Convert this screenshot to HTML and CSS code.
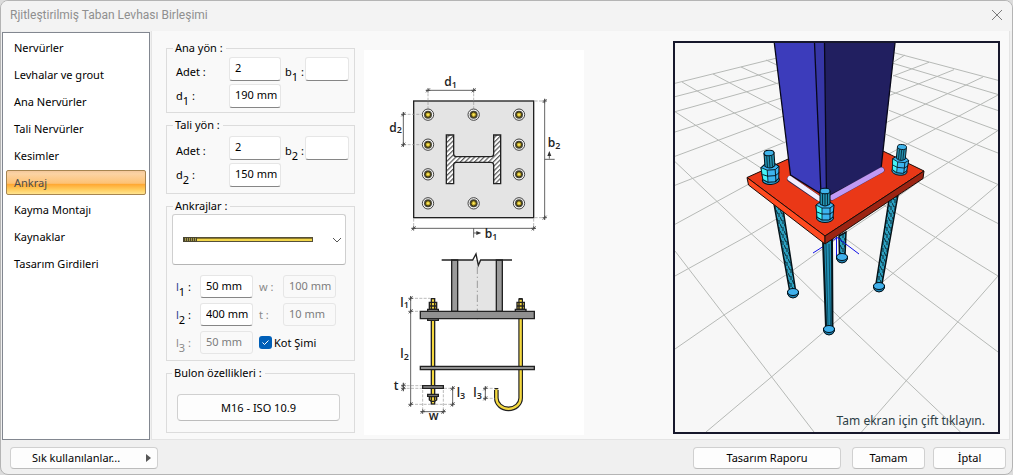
FILE: index.html
```
<!DOCTYPE html>
<html lang="tr">
<head>
<meta charset="utf-8">
<title>Rjitleştirilmiş Taban Levhası Birleşimi</title>
<link rel="stylesheet" href="styles.css">
</head>
<body>
<div class="window">
  <header class="titlebar">
    <h1 class="title">Rjitleştirilmiş Taban Levhası Birleşimi</h1>
    <button class="close" type="button" aria-label="Kapat">
      <svg width="12" height="12" viewBox="0 0 12 12"><path d="M1 1L11 11M11 1L1 11" fill="none" stroke="#7b7b7b" stroke-width="1"/></svg>
    </button>
  </header>

  <main class="content">
    <nav class="sections">
      <button class="section" type="button">Nervürler</button>
      <button class="section" type="button">Levhalar ve grout</button>
      <button class="section" type="button">Ana Nervürler</button>
      <button class="section" type="button">Tali Nervürler</button>
      <button class="section" type="button">Kesimler</button>
      <button class="section selected" type="button" aria-current="page">Ankraj</button>
      <button class="section" type="button">Kayma Montajı</button>
      <button class="section" type="button">Kaynaklar</button>
      <button class="section" type="button">Tasarım Girdileri</button>
    </nav>

    <div class="panel">
      <form class="form">
        <fieldset class="group">
          <legend>Ana yön :</legend>
          <div class="grid main-grid">
            <label class="upper" for="n1">Adet :</label><input id="n1" type="text" value="2">
            <label class="upper side" for="b1">b<sub>1</sub> :</label><input id="b1" type="text">
            <label for="d1">d<sub>1</sub> :</label><input id="d1" type="text" value="190 mm">
          </div>
        </fieldset>
        <fieldset class="group secondary">
          <legend>Tali yön :</legend>
          <div class="grid main-grid">
            <label class="upper" for="n2">Adet :</label><input id="n2" type="text" value="2">
            <label class="upper side" for="b2">b<sub>2</sub> :</label><input id="b2" type="text">
            <label for="d2">d<sub>2</sub> :</label><input id="d2" type="text" value="150 mm">
          </div>
        </fieldset>
        <fieldset class="group anchors">
          <legend>Ankrajlar :</legend>
          <div class="picker">
            <select class="picker-select" aria-label="Ankraj tipi"><option></option></select>
            <svg class="picker-bolt" width="130" height="6" viewBox="0 0 130 6">
              <rect x="0.5" y="0.5" width="129" height="4" fill="#f2d64a" stroke="#55503a"/>
              <rect x="0" y="0" width="14" height="5" fill="#4a4630"/>
              <path d="M2.500 1V4M4.500 1V4M6.500 1V4M8.500 1V4M10.500 1V4M12.500 1V4" stroke="#a59845"/>
              <path d="M14 1.500H129" stroke="#8d7a2a"/>
            </svg>
            <svg class="picker-arrow" width="10" height="6" viewBox="0 0 10 6"><path d="M1 1L5 5L9 1" fill="none" stroke="#555"/></svg>
          </div>
          <div class="grid size-grid">
            <label for="l1"><i class="ell">l</i><sub>1</sub> :</label><input id="l1" type="text" value="50 mm">
            <label class="off side" for="w">w :</label><input id="w" type="text" value="100 mm" disabled>
            <label for="l2"><i class="ell">l</i><sub>2</sub> :</label><input id="l2" type="text" value="400 mm">
            <label class="off side" for="t">t :</label><input id="t" type="text" value="10 mm" disabled>
            <label class="off" for="l3"><i class="ell">l</i><sub>3</sub> :</label><input id="l3" type="text" value="50 mm" disabled>
            <label class="check"><input class="tick" type="checkbox" checked>Kot Şimi</label>
          </div>
        </fieldset>
        <fieldset class="group bolt">
          <legend>Bulon özellikleri :</legend>
          <button class="button" type="button">M16 - ISO 10.9</button>
        </fieldset>
      </form>

      <svg class="diagram" viewBox="0 0 660 1155" role="img" aria-label="Ankraj yerleşimi">
        <defs>
          <pattern id="hatch" width="10" height="10" patternUnits="userSpaceOnUse" patternTransform="rotate(45)">
            <rect width="10" height="10" fill="#fff"/><path d="M2 0V10" stroke="#333" stroke-width="3"/>
          </pattern>
          <g id="hole">
            <circle r="17" fill="#f4f4f4" stroke="#444" stroke-width="3"/>
            <circle r="12" fill="#4a4a42"/>
            <circle r="8" fill="#c9b02c" stroke="#3a3412" stroke-width="3"/>
            <circle r="3" fill="#ffee66"/>
          </g>
          <path id="tick" d="M-6 6L6 -6M-7 0H7M0 -7V7" stroke="#444" stroke-width="2.500"/>
        </defs>
        <rect x="149" y="153" width="360" height="350" fill="#e4e4e4" stroke="#222" stroke-width="4"/>
        <path d="M247 255H269V312Q269 320 277 320H381Q389 320 389 312V255H410V401H389V345Q389 337 381 337H277Q269 337 269 345V401H247Z" fill="url(#hatch)" stroke="#222" stroke-width="4"/>
        <g class="thin dash">
          <path d="M192 130V176M329 130V176M118 193H172M118 284H172M512 153H545M512 503H545M149 506V535M509 506V535"/>
        </g>
        <g class="thin">
          <path d="M186 121H336M118 186V290M542 147V509M143 535H515M542 328H572M556 326V308M329 535V563M329 549H346"/>
        </g>
        <path d="M556 303L562 318H550ZM352 549L337 543V555Z" fill="#333"/>
        <use href="#tick" x="192" y="121"/><use href="#tick" x="329" y="121"/>
        <use href="#tick" x="118" y="193"/><use href="#tick" x="118" y="284"/>
        <use href="#tick" x="542" y="153"/><use href="#tick" x="542" y="503"/>
        <use href="#tick" x="149" y="535"/><use href="#tick" x="509" y="535"/>
        <use href="#hole" x="192" y="194"/><use href="#hole" x="329" y="194"/><use href="#hole" x="465" y="194"/>
        <use href="#hole" x="192" y="284"/><use href="#hole" x="465" y="284"/>
        <use href="#hole" x="192" y="373"/><use href="#hole" x="465" y="373"/>
        <use href="#hole" x="192" y="460"/><use href="#hole" x="329" y="460"/><use href="#hole" x="465" y="460"/>
        <g class="dim">
          <text x="241" y="109">d<tspan class="idx" dy="5">1</tspan></text>
          <text x="76" y="245">d<tspan class="idx" dy="5">2</tspan></text>
          <text x="551" y="290">b<tspan class="idx" dy="6">2</tspan></text>
          <text x="362" y="563">b<tspan class="idx" dy="6">1</tspan></text>
        </g>

        <g transform="translate(0 570)">
          <rect x="282" y="60" width="115" height="154" fill="#e4e4e4"/>
          <path d="M263 60H281V214H263ZM397 60H415V214H397Z" fill="#9a9a9a" stroke="#222" stroke-width="4"/>
          <path d="M233 60H326L336 42L343 76L350 60H444" fill="none" stroke="#222" stroke-width="4"/>
          <path d="M340 80V238" stroke="#777" stroke-width="2" stroke-dasharray="22 8 4 8"/>
          <path d="M397 450V474A36 32 0 0 0 470 474V176" fill="none" stroke="#222" stroke-width="14"/>
          <path d="M397 447V474A36 32 0 0 0 470 474V179" fill="none" stroke="#f5d93f" stroke-width="7"/>
          <path d="M391 446H403M464 176H476" stroke="#222" stroke-width="4"/>
          <rect x="202" y="176" width="10" height="316" fill="#f5d93f" stroke="#222" stroke-width="4"/>
          <g fill="#f0d23c" stroke="#222" stroke-width="4">
            <path d="M196 187H218V208H196ZM459 187H481V208H459ZM196 470H218V480L212 484H202L196 480Z"/>
            <path d="M202 187V208M212 187V208M465 187V208M475 187V208M196 198H218M459 198H481M202 470V482M212 470V482"/>
          </g>
          <g fill="#909090" stroke="#222" stroke-width="4">
            <path d="M169 214H511V236H169ZM169 379H511V389H169Z"/>
            <path d="M191 208H223V214H191ZM454 208H486V214H454ZM191 236H223V241H191ZM176 437H238V445H176ZM191 463H223V469H191Z"/>
          </g>
          <g class="thin dash"><path d="M140 175H198M140 214H168M115 437H174M115 445H174M140 493H200M176 450V515M238 450V515M240 445H266M214 493H266M364 445H392M364 475H392"/></g>
          <g class="thin"><path d="M140 168V499M170 515H244M266 440V498M364 440V480M118 428V454"/></g>
          <use href="#tick" x="140" y="175"/><use href="#tick" x="140" y="214"/><use href="#tick" x="140" y="493"/>
          <use href="#tick" x="118" y="436"/><use href="#tick" x="118" y="446"/>
          <use href="#tick" x="176" y="515"/><use href="#tick" x="238" y="515"/>
          <use href="#tick" x="266" y="445"/><use href="#tick" x="266" y="493"/>
          <use href="#tick" x="364" y="445"/><use href="#tick" x="364" y="475"/>
          <g class="dim strong">
            <text x="109" y="200">l<tspan class="idx" dy="5">1</tspan></text>
            <text x="109" y="355">l<tspan class="idx" dy="5">2</tspan></text>
            <text x="89" y="449">t</text>
            <text x="194" y="540">w</text>
            <text x="278" y="472">l<tspan class="idx" dy="6">3</tspan></text>
            <text x="328" y="472">l<tspan class="idx" dy="6">3</tspan></text>
          </g>
        </g>
      </svg>

      <div class="viewport">
        <svg class="scene" viewBox="675 43 323 389" role="img" aria-label="Birleşimin üç boyutlu görünümü">
          <defs>
            <pattern id="thread" width="4" height="7" patternUnits="userSpaceOnUse">
              <rect width="4" height="7" fill="#2ba0c0"/><path d="M0 0L2 4M3 3V7" stroke="#0a2733" stroke-width="1"/>
            </pattern>
            <g id="nut">
              <ellipse cx="0" cy="27" rx="8.500" ry="4.500" fill="#2f9fd0" stroke="#021018" stroke-width="1"/>
              <path d="M-9 14L-8 26L-3 29H4L8 26L9 14L5 11H-5Z" fill="#3cb4f0" stroke="#021018"/>
              <path d="M-9 14L-8 26L-3 29V17Z" fill="#45f4f8" stroke="#021018" stroke-width="0.800"/>
              <path d="M-3 17H5L9 14M5 17V29M-8 21L-3 23H5L9 20" fill="none" stroke="#021018" stroke-width="0.900"/>
              <path d="M-5 0V13Q0 17 5 13V0Z" fill="#2593b2" stroke="#021018"/>
              <path d="M-2.500 3V14M0 3V15M2.500 3V14" stroke="#073040"/>
              <ellipse rx="5" ry="2.800" fill="#40b4ea" stroke="#021018"/>
            </g>
            <g id="foot">
              <path d="M-5.500 -1V2Q-4 6 0 6T5.500 2V-1Z" fill="#1d7fae" stroke="#021018"/>
              <ellipse rx="5.500" ry="3.500" fill="#3fb0ec" stroke="#021018"/>
            </g>
          </defs>
          <rect x="675" y="43" width="323" height="389" fill="#f7f7f7"/>
          <g fill="none" stroke="#b6b9b6" stroke-width="1">
            <path d="M675 83.300L777 58M675 96.700L778 70M675 111.700L780 82.500M675 132L783 97.500M675 156.300L785 115.500M675 185.300L788 141M675 224.300L760 178"/>
            <path d="M766 60L777 65M741 67L778 84M713 74L781 110M682 82L785 143M675 111.700L770 174M675 161.700L719 203.300L751 233.500L792 271L840 318L960.500 432M675 251L814 432"/>
            <path d="M894 52.700L998 80.300M893 63.300L998 94.500M893 75.300L998 110.500M890 91L998 130.500M889 110.300L998 153M886 134.300L998 184.500M910 178L998 223.500M880 203L998 276M820 220L893 273.300L998 352"/>
            <path d="M894 61.700L905 55M893 76L929 62.300M890 95.300L954 69.700M886 122.700L983 77M885 156L908 143.700L998 95M675 349L724 315L792 271L842 235L885 206L921 180L998 130.500M706 432L772 376.500L840 318L893 273.300L936 237L998 184.500M861.500 432L906 381L958 321.700L998 276M675 276L751 234L790 211"/>
          </g>
          <g stroke="#06141a" fill="url(#thread)" stroke-width="1.500">
            <path d="M774 204L783 209L795.500 290H789.500Z"/>
            <path d="M889 200L898 195L882 284H876Z"/>
            <path d="M839 236L846 232L845 256H839.500Z"/>
          </g>
          <path d="M836.500 237V257M836.500 237L859 254M836.500 238L813 253" stroke="#1010e8" fill="none"/>
          <use href="#foot" x="793" y="292"/><use href="#foot" x="879" y="286"/><use href="#foot" x="842" y="257"/>
          <path d="M823 240H832L832.500 327H826Z" fill="#2290b4" stroke="#06141a" stroke-width="2"/>
          <path d="M826 244L828 326M829 244L830.500 326" stroke="#0b5068"/>
          <use href="#foot" x="829" y="329"/>

          <g stroke="#1a0c08" stroke-width="1" stroke-linejoin="round">
            <path d="M747 177.500L846 133L924 171L825 236Z" fill="#ea3817"/>
            <path d="M747 177.500L825 236V244L748.500 185Z" fill="#ff4a20"/>
            <path d="M825 236L924 171L923 178.500L825 244Z" fill="#9c2413"/>
          </g>
          <path d="M774.300 43H815L821 194L790.500 175Z" fill="#3c3cbb"/>
          <path d="M814.500 43H825L827 197L820.500 194Z" fill="#3636a6"/>
          <path d="M824.500 43H895L881 169L826.500 197Z" fill="#211f60"/>
          <path d="M774.300 43L790.500 175L821 194M814.500 43L821 194M824.500 43L826.500 197L881 169L895 43" fill="none" stroke="#07071a" stroke-width="1.300"/>
          <path d="M790 179L818 198" stroke="#33254a" stroke-width="6" stroke-linecap="round"/>
          <path d="M790 178.500L819 198.500" stroke="#f3efff" stroke-width="5" stroke-linecap="round"/>
          <path d="M881.500 170L832 197.500" stroke="#4a3766" stroke-width="6" stroke-linecap="round"/>
          <path d="M881.500 170L832 197.500" stroke="#c09af5" stroke-width="5" stroke-linecap="round"/>
          <use href="#nut" transform="translate(825 191)"/>
          <use href="#nut" transform="translate(769 153) rotate(-4)"/>
          <use href="#nut" transform="translate(902 147) rotate(6) scale(.9)"/>
        </svg>
        <p class="hint">Tam ekran için çift tıklayın.</p>
      </div>
    </div>
  </main>

  <footer class="footer">
    <button class="button favorites" type="button">Sık kullanılanlar...
      <svg width="5" height="8" viewBox="0 0 5 8"><path d="M0 0L5 4L0 8Z" fill="#555"/></svg>
    </button>
    <button class="button report" type="button">Tasarım Raporu</button>
    <button class="button small" type="button">Tamam</button>
    <button class="button small" type="button">İptal</button>
  </footer>
</div>
</body>
</html>
```
FILE: styles.css
```
* { box-sizing: border-box; }

body {
  margin: 0;
  background: #dcdcdc;
  color: #000;
  font: 11px/14px "Noto Sans", "Open Sans", sans-serif;
}

button, input, select { font: inherit; color: inherit; margin: 0; }

.window {
  display: flex;
  flex-direction: column;
  min-height: 100vh;
  background: #f0f0f0;
  border: 1px solid #b4b4b4;
  border-radius: 8px;
  overflow: hidden;
}

.titlebar {
  display: flex;
  align-items: center;
  justify-content: space-between;
  height: 30px;
  padding: 0 9px 2px 9px;
  background: #f3f3f3;
}
.title { margin: 0; color: #8f8f8f; font: 12px/16px Roboto, "Noto Sans", sans-serif; }
.close { display: flex; padding: 0; border: 0; background: none; }

.content { display: flex; flex: 1; }

.sections {
  display: flex;
  flex-direction: column;
  gap: 2px;
  width: 148px;
  margin: 1px 1px 0 1px;
  padding: 2px 3px;
  background: #fff;
  border: 1px solid #828790;
}
.section {
  height: 25px;
  padding: 0 7px;
  text-align: left;
  background: none;
  border: 1px solid transparent;
  border-radius: 2px;
}
.selected {
  color: #4c4c4c;
  border-color: #a78550;
  background: linear-gradient(#f3c79b, #fbd3a4 12%, #fdc274 54%, #ffa52f 56%, #ffcb5c 80%, #ffe48f);
}

.panel {
  display: flex;
  flex: 1;
  align-items: flex-start;
  margin-right: 2px;
  padding: 10px 9px 4px 14px;
  background: #f9f9f9;
  border: 1px solid #e4e4e4;
  border-top: 0;
}

.form { display: flex; flex-direction: column; gap: 5px; width: 189px; }
.group {
  min-width: 0;
  margin: 0;
  padding: 2px 5px 4px 9px;
  border: 1px solid #dcdcdc;
}
.group legend { margin-left: -3px; padding: 0 3px 0 2px; }
.secondary { padding-top: 4px; padding-bottom: 6px; }
.anchors { padding: 1px 8px 6px 5px; }
.anchors legend { margin-left: 1px; }
.bolt { padding: 14px 14px 11px 10px; }
.bolt legend { margin-left: -5px; }

.grid { display: grid; align-items: center; }
.main-grid { grid-template-columns: 53px 52px 24px 1fr; gap: 3px 0; }
.main-grid .side { padding-left: 4px; }
.upper { padding-top: 6px; }
.size-grid { grid-template-columns: 24px 53px 30px 53px; gap: 5px 0; padding: 10px 0 0 4px; }
.size-grid .side { padding-left: 6px; }
sub { font-size: 11px; line-height: 0; vertical-align: -5px; }
.ell { font-style: normal; color: #2c3c90; }
.off, .off .ell { color: #8a8a8a; }

input[type="text"] {
  width: 100%;
  min-width: 0;
  height: 24px;
  padding: 0 1px 3px 5px;
  background: #fff;
  border: 1px solid #e6e6e6;
  border-bottom-color: #868686;
  border-radius: 3px;
}
.size-grid input[type="text"] { height: 23px; }
input[type="text"]:disabled { background: #f9f9f9; color: #7c7c7c; border-color: #e6e6e6; }

.check { grid-column: 3 / 5; display: flex; align-items: center; gap: 2px; padding-left: 6px; }
.tick {
  appearance: none;
  width: 13px;
  height: 13px;
  border-radius: 3px;
  background: #005fb8 url("data:image/svg+xml,%3Csvg xmlns='http://www.w3.org/2000/svg' viewBox='0 0 13 13'%3E%3Cpath d='M3.500 6.500L5.500 8.500L9.500 4.500' fill='none' stroke='white'/%3E%3C/svg%3E");
}

.picker { display: grid; grid-template-columns: 1fr auto; align-items: center; }
.picker > * { grid-row: 1; }
.picker-select {
  grid-column: 1 / 3;
  appearance: none;
  width: 100%;
  height: 51px;
  background: #fff;
  border: 1px solid #cfcfcf;
  border-bottom-color: #b5b5b5;
  border-radius: 3px;
}
.picker-bolt, .picker-arrow { pointer-events: none; }
.picker-bolt { grid-column: 1; margin-left: 11px; }
.picker-arrow { grid-column: 2; margin-right: 4px; }

.button {
  height: 22px;
  padding: 0 10px;
  background: #fdfdfd;
  border: 1px solid #d0d0d0;
  border-bottom-color: #bcbcbc;
  border-radius: 4px;
}
.bolt .button { width: 100%; height: 27px; }

.diagram { width: 220px; margin: 9px 0 0 9px; background: #fff; }
.thin { fill: none; stroke: #444; stroke-width: 2.500; }
.dash { stroke: #999; stroke-width: 2; stroke-dasharray: 9 4; }
.dim { font: 600 36px "Open Sans", "Noto Sans", sans-serif; fill: #222; }
.idx { font-size: 27px; }

.viewport { position: relative; width: 327px; margin-left: auto; border: 2px solid #17182c; }
.scene { display: block; width: 100%; }
.hint { position: absolute; right: 13px; bottom: 3px; margin: 0; color: #2d4046; font-size: 12px; line-height: 16px; }

.footer { display: flex; align-items: center; padding: 7px 6px 5px 9px; }
.footer .small { width: 73px; }
.favorites { display: flex; align-items: center; justify-content: space-between; width: 148px; padding: 0 6px 0 21px; margin-right: auto; }
.report { width: 148px; margin-right: 11px; }
.report + .small { margin-right: 8px; }
```
